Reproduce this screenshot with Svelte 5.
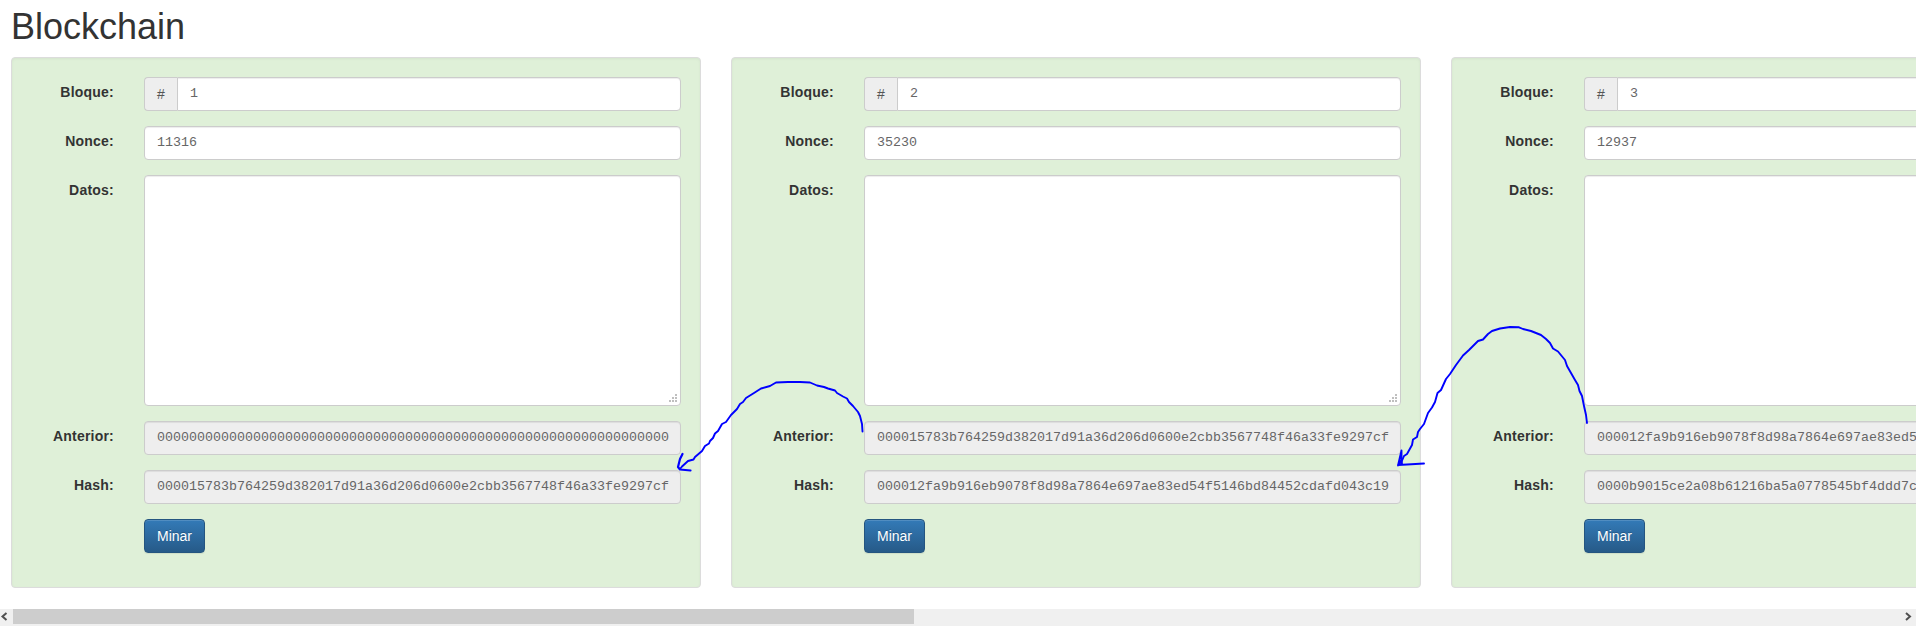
<script lang="ts">
  const blocks = [
    {
      number: '1',
      nonce: '11316',
      previous: '0000000000000000000000000000000000000000000000000000000000000000',
      hash: '000015783b764259d382017d91a36d206d0600e2cbb3567748f46a33fe9297cf',
    },
    {
      number: '2',
      nonce: '35230',
      previous: '000015783b764259d382017d91a36d206d0600e2cbb3567748f46a33fe9297cf',
      hash: '000012fa9b916eb9078f8d98a7864e697ae83ed54f5146bd84452cdafd043c19',
    },
    {
      number: '3',
      nonce: '12937',
      previous: '000012fa9b916eb9078f8d98a7864e697ae83ed5',
      hash: '0000b9015ce2a08b61216ba5a0778545bf4ddd7c',
    },
  ];
</script>

<div class="page">
  <h1>Blockchain</h1>
  <div class="chain">
    {#each blocks as block}
      <section class="well">
        <div class="row">
          <span class="label">Bloque:</span>
          <div class="group">
            <span class="addon">#</span>
            <div class="control">{block.number}</div>
          </div>
        </div>
        <div class="row">
          <span class="label">Nonce:</span>
          <div class="control">{block.nonce}</div>
        </div>
        <div class="row">
          <span class="label">Datos:</span>
          <div class="control area">
            <svg class="grip" width="8" height="8" viewBox="0 0 8 8" shape-rendering="crispEdges">
              <path d="M6 0h2v2h-2zM3 3h2v2h-2zM6 3h2v2h-2zM0 6h2v2h-2zM3 6h2v2h-2zM6 6h2v2h-2z" fill="#bfbfbf" />
            </svg>
          </div>
        </div>
        <div class="row">
          <span class="label">Anterior:</span>
          <div class="control readonly">{block.previous}</div>
        </div>
        <div class="row">
          <span class="label">Hash:</span>
          <div class="control readonly">{block.hash}</div>
        </div>
        <div class="row">
          <span class="label"></span>
          <button>Minar</button>
        </div>
      </section>
    {/each}
  </div>
  <div class="scrollbar">
    <span class="arrow"><svg width="13" height="15" viewBox="0 0 13 15"><path d="M6.500 4L2.500 7.500l4 3.500" /></svg></span>
    <div class="thumb"></div>
    <span class="arrow end"><svg width="13" height="15" viewBox="0 0 13 15"><path d="M3 4L7 7.500l-4 3.500" /></svg></span>
  </div>
  <svg class="links" width="1916" height="626" viewBox="0 0 1916 626">
    <path d="M862.500 431.500L862 424L860 416L858 412L853 406L849 402L847 398.500L843 396.500L837 393L835 390.500L828 388.500L824 387L817 385.500L810 382.500L800 382L788 382L776 382.500L770 386L761 388.500L754 393L746 398L743 402L740 404L737 409L731 415L726 422L722 424L718 431L715 433.500L713 438L710 441L709 443.500L705 446L702 451L695 457L693.500 459.500L688 461L682 466.500L680 469" />
    <path d="M682.500 454L680 459L678 467L680 469.500L690.500 470.500" stroke-width="2.2" />
    <path d="M1587 423L1586 415L1584 406L1582 396L1579.500 391L1578 385L1575 380L1571 373L1567 366L1565 360L1558 351.500L1553 348.500L1550 343L1546 339L1541 335L1536 333L1531 331L1523 329L1519 327.300L1510 327L1500 328.500L1492 331L1488 334L1483 339.500L1478 341L1472 347L1469 350L1463 355.500L1456 365L1450 374L1446 379L1441 390L1437.500 393L1435 402L1432 407.500L1428 413L1424 424L1420 429L1418 432L1417 437L1413 439.500L1412 445L1407 454L1404 456L1401 463" />
    <path d="M1401.500 450.500L1398 465.500L1401.500 460L1402 464M1401.500 450.500L1401.500 464.500M1398 465L1407 464.500L1424 463.500" />
  </svg>
</div>

<style>
  :global(body) {
    margin: 0;
    background: #fff;
    overflow: hidden;
  }
  .page {
    position: relative;
    box-sizing: border-box;
    width: 1916px;
    height: 626px;
    overflow: hidden;
    font: 14px/20px "Liberation Sans", Arial, sans-serif;
    color: #333;
  }
  h1 {
    margin: 0;
    padding: 7px 11px 10px;
    font-size: 36px;
    line-height: 40px;
    font-weight: 400;
  }
  .chain {
    display: flex;
    gap: 30px;
    padding-left: 11px;
  }
  .well {
    flex: none;
    box-sizing: border-box;
    display: flex;
    flex-direction: column;
    gap: 15px;
    width: 690px;
    height: 531px;
    padding: 19px;
    border: 1px solid #dcdcdc;
    border-radius: 4px;
    background: #dff0d8;
    box-shadow: inset 0 1px 3px rgba(0, 0, 0, 0.05), 0 1px 0 rgba(255, 255, 255, 0.1);
  }
  .row {
    display: flex;
    align-items: flex-start;
  }
  .label {
    width: 83px;
    padding: 5px 30px 0 0;
    flex: none;
    text-align: right;
    font-weight: 700;
    letter-spacing: 0.22px;
  }
  .group {
    display: flex;
    flex: 1;
  }
  .addon {
    box-sizing: border-box;
    width: 33px;
    height: 34px;
    padding-top: 6px;
    border: 1px solid #ccc;
    border-right: 0;
    border-radius: 4px 0 0 4px;
    background: #eee;
    color: #555;
    text-align: center;
  }
  .control {
    box-sizing: border-box;
    flex: 1;
    height: 34px;
    padding: 6px 12px;
    overflow: hidden;
    border: 1px solid #ccc;
    border-radius: 4px;
    background: #fff;
    box-shadow: inset 0 1px 1px rgba(0, 0, 0, 0.075);
    color: #666;
    font: 13.333px/20px "Liberation Mono", "Courier New", monospace;
    white-space: nowrap;
  }
  .group .control {
    border-radius: 0 4px 4px 0;
  }
  .readonly {
    background: #eee;
  }
  .area {
    display: flex;
    align-items: flex-end;
    justify-content: flex-end;
    height: 231px;
    padding: 3px;
  }
  button {
    box-sizing: border-box;
    width: 61px;
    height: 34px;
    padding: 0;
    border: 1px solid #245580;
    border-radius: 4px;
    background: linear-gradient(#337ab7, #265a88);
    box-shadow: inset 0 1px 0 rgba(255, 255, 255, 0.15), 0 1px 1px rgba(0, 0, 0, 0.075);
    color: #fff;
    font: 14px/20px "Liberation Sans", Arial, sans-serif;
    text-shadow: 0 -1px 0 rgba(0, 0, 0, 0.2);
  }
  .scrollbar {
    display: flex;
    height: 17px;
    margin-top: 21px;
    background: #f0f0f0;
  }
  .thumb {
    width: 901px;
    height: 15px;
    background: #cdcdcd;
  }
  .arrow {
    width: 13px;
    height: 15px;
  }
  .arrow.end {
    margin-left: auto;
  }
  .arrow path {
    fill: none;
    stroke: #505050;
    stroke-width: 2;
  }
  .links {
    position: absolute;
    left: 0;
    top: 0;
    fill: none;
    stroke: #00f;
    stroke-width: 1.9;
    stroke-linejoin: round;
    stroke-linecap: round;
    pointer-events: none;
  }
</style>
